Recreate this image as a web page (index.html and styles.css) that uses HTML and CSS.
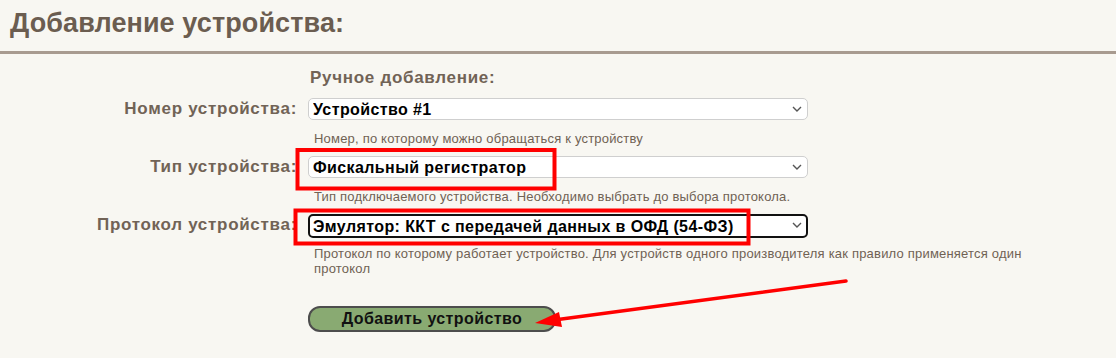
FILE: index.html
```html
<!DOCTYPE html>
<html lang="ru">
  <head>
    <meta charset="UTF-8" />
    <meta name="viewport" content="width=device-width, initial-scale=1.0" />
    <title>Добавление устройства</title>
    <link rel="stylesheet" href="styles.css">
  </head>
  <body>
    <div class="page-header">
      <h1>Добавление устройства:</h1>
    </div>

    <form class="device-form">
      <div class="form-title">Ручное добавление:</div>

      <label class="form-label" for="num">Номер устройства:</label>
      <div class="form-field">
        <div class="select-wrap">
          <select id="num"><option>Устройство #1</option></select>
          <svg class="chevron" width="10" height="6" viewBox="0 0 10 6"><path d="M1 1l4 4 4-4" fill="none" stroke="#555" stroke-width="1.4"/></svg>
        </div>
        <div class="hint">Номер, по которому можно обращаться к устройству</div>
      </div>

      <label class="form-label" for="type">Тип устройства:</label>
      <div class="form-field">
        <div class="select-wrap">
          <select id="type"><option>Фискальный регистратор</option></select>
          <svg class="chevron" width="10" height="6" viewBox="0 0 10 6"><path d="M1 1l4 4 4-4" fill="none" stroke="#555" stroke-width="1.4"/></svg>
        </div>
        <div class="hint">Тип подключаемого устройства. Необходимо выбрать до выбора протокола.</div>
      </div>

      <label class="form-label" for="proto">Протокол устройства:</label>
      <div class="form-field">
        <div class="select-wrap">
          <select id="proto" class="active"><option>Эмулятор: ККТ с передачей данных в ОФД (54-ФЗ)</option></select>
          <svg class="chevron" width="10" height="6" viewBox="0 0 10 6"><path d="M1 1l4 4 4-4" fill="none" stroke="#555" stroke-width="1.4"/></svg>
        </div>
        <div class="hint">Протокол по которому работает устройство. Для устройств одного производителя как правило применяется один протокол</div>
      </div>

      <div class="form-actions">
        <button type="button" class="add-btn">Добавить устройство</button>
      </div>
    </form>

    <!-- пометки на скриншоте -->
    <svg class="marks" width="1116" height="358" viewBox="0 0 1116 358">
      <rect x="297.5" y="150" width="257" height="38.5" fill="none" stroke="#f00" stroke-width="4"/>
      <rect x="295.5" y="210.5" width="453" height="33" fill="none" stroke="#f00" stroke-width="4"/>
      <line x1="846" y1="281" x2="558" y2="319.5" stroke="#f00" stroke-width="3.5" stroke-linecap="round"/>
      <polygon points="535,323 562,327 559,312" fill="#f00"/>
    </svg>
  </body>
</html>
```

FILE: styles.css
```css
body {
  margin: 0;
  font-family: "Liberation Sans", Arial, sans-serif;
  background-color: #f8f7f2;
  color: #6e6154;
  position: relative;
}

.page-header {
  padding: 7px 10px 0;
  height: 44px;
  border-bottom: 3px solid #a89b90;
}

.page-header h1 {
  margin: 0;
  font-size: 27px;
  line-height: 32px;
  color: #6b5d50;
  letter-spacing: 0.1px;
}

.device-form {
  display: grid;
  grid-template-columns: 296px 500px;
  column-gap: 12px;
  padding-top: 14px;
}

.form-title {
  grid-column: 2;
  padding-left: 2px;
  font-size: 17px;
  font-weight: bold;
  letter-spacing: 0.7px;
  line-height: 20px;
  margin-bottom: 10px;
  color: #716356;
}

.form-label {
  text-align: right;
  font-size: 17px;
  font-weight: bold;
  letter-spacing: 0.7px;
  line-height: 22px;
  color: #716356;
  margin-right: -1px;
}

.form-field {
  padding-bottom: 10px;
}

.select-wrap {
  position: relative;
  width: 500px;
}

.select-wrap select {
  display: block;
  width: 100%;
  height: 22px;
  margin: 0;
  padding: 0 24px 0 4px;
  appearance: none;
  -webkit-appearance: none;
  background-color: #fff;
  border: 1px solid #cfcfcf;
  border-radius: 5px;
  font-family: "Liberation Sans", Arial, sans-serif;
  font-size: 16px;
  font-weight: bold;
  letter-spacing: 0.4px;
  color: #000;
}

.select-wrap select.active {
  height: 24px;
  margin-bottom: -3px;
  border: 2px solid #111;
  padding-left: 3px;
}

.chevron {
  position: absolute;
  right: 6px;
  top: 8px;
}

.hint {
  width: 712px;
  margin-top: 11px;
  padding-left: 6px;
  font-size: 13px;
  letter-spacing: 0.2px;
  line-height: 15px;
  color: #706254;
}

.form-actions {
  grid-column: 2;
  padding-top: 20px;
}

.add-btn {
  display: block;
  width: 248px;
  height: 26px;
  background-color: #89aa72;
  border: 2px solid #4d4d4d;
  border-radius: 12px;
  font-family: "Liberation Sans", Arial, sans-serif;
  font-size: 16px;
  font-weight: bold;
  letter-spacing: 0.4px;
  color: #111;
  cursor: pointer;
  padding: 0;
}

.marks {
  position: absolute;
  left: 0;
  top: 0;
  pointer-events: none;
}
```
